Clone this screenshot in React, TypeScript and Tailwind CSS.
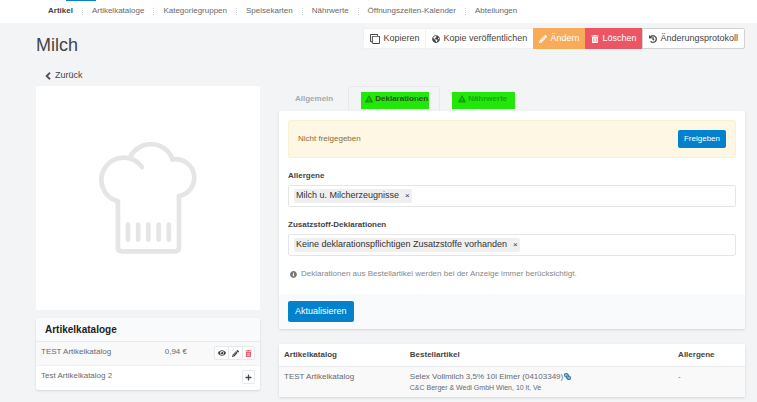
import React, { useState } from 'react';
import {
  FaChevronLeft,
  FaExclamationTriangle,
  FaEye,
  FaGlobeAmericas,
  FaHistory,
  FaInfoCircle,
  FaLink,
  FaPencilAlt,
  FaPlus,
  FaRegClone,
  FaTrashAlt,
} from 'react-icons/fa';

const NAV_ITEMS = [
  'Artikel',
  'Artikelkataloge',
  'Kategoriegruppen',
  'Speisekarten',
  'Nährwerte',
  'Öffnungszeiten-Kalender',
  'Abteilungen',
];

const ChefHat: React.FC = () => (
  <svg
    viewBox="0 0 292 332"
    className="w-[44%]"
    fill="none"
    stroke="#e5e5e5"
    strokeWidth="14"
    strokeLinecap="round"
    strokeLinejoin="round"
    aria-hidden="true"
  >
    <path d="M127 74 A66 66 0 1 0 56 176 V312 Q56 324 68 324 H225 Q237 324 237 312 V160 A54 54 0 1 0 218 52" />
    <path d="M94 42 A68 68 0 0 1 218 52" />
    <path d="M86 245 V289 M116 245 V289 M146 245 V289 M177 245 V289 M207 245 V289" />
  </svg>
);

const TopNav: React.FC = () => (
  <header className="bg-white h-[23px]">
    <div className="ml-[66px] h-px w-[30px] bg-[#0282cc]" />
    <nav className="flex items-center h-5 pl-12 text-[8px] whitespace-nowrap">
      {NAV_ITEMS.map((item, i) => (
        <React.Fragment key={item}>
          {i > 0 && <span className="mx-[9px] h-[7px] border-l border-dotted border-gray-300" />}
          <a href="#" className={i === 0 ? 'font-bold text-[#444]' : 'text-[#676a6c]'}>
            {item}
          </a>
        </React.Fragment>
      ))}
    </nav>
  </header>
);

const Toolbar: React.FC = () => (
  <div className="flex h-[21px] text-[9px] text-[#444] whitespace-nowrap">
    <button className="flex items-center gap-[3px] px-1.5 bg-white border border-[#eef0f1] rounded-l-xs">
      <FaRegClone size={10} className="-scale-y-100" /> Kopieren
    </button>
    <button className="flex items-center gap-[3px] px-1.5 bg-white border-y border-[#eef0f1]">
      <FaGlobeAmericas size={8} /> Kopie veröffentlichen
    </button>
    <button className="flex items-center gap-[3px] px-1.5 bg-[#f8ac59] text-white">
      <FaPencilAlt size={8} /> Ändern
    </button>
    <button className="flex items-center gap-[3px] px-1.5 bg-[#ed5565] text-white">
      <FaTrashAlt size={8} /> Löschen
    </button>
    <button className="flex items-center gap-[3px] px-1.5 bg-white border border-[#d2d2d2] rounded-r-xs">
      <FaHistory size={8} strokeWidth={20} /> Änderungsprotokoll
    </button>
  </div>
);

const CatalogCard: React.FC = () => (
  <section className="bg-white rounded-xs shadow-sm overflow-hidden">
    <h2 className="flex items-center h-[23px] px-[9px] bg-[#f9fafc] text-[10px] font-bold text-[#222]">
      Artikelkataloge
    </h2>
    <table className="w-full text-[8px] leading-3 text-[#676a6c]">
      <tbody>
        <tr className="h-6 bg-[#f9f9f9] border-t border-[#e7eaec] align-top">
          <td className="pt-1 pl-[5px]">TEST Artikelkatalog</td>
          <td className="pt-1 text-right">0,94 €</td>
          <td className="w-[73px] pt-1 pr-[5px]">
            <div className="flex justify-end">
              <button aria-label="Anzeigen" className="flex items-center justify-center w-[15px] h-[14px] bg-white border border-[#e7eaec] rounded-l-xs text-[#444]">
                <FaEye size={8} />
              </button>
              <button aria-label="Bearbeiten" className="flex items-center justify-center w-[13px] h-[14px] bg-white border-y border-[#e7eaec] text-[#444]">
                <FaPencilAlt size={7} />
              </button>
              <button aria-label="Entfernen" className="flex items-center justify-center w-[13px] h-[14px] bg-white border border-[#e7eaec] rounded-r-xs text-[#ed5565]">
                <FaTrashAlt size={7} />
              </button>
            </div>
          </td>
        </tr>
        <tr className="h-6 border-t border-[#f0f1f2] align-top">
          <td className="pt-1 pl-[5px]">Test Artikelkatalog 2</td>
          <td />
          <td className="pt-1 pr-[5px]">
            <button aria-label="Hinzufügen" className="flex items-center justify-center ml-auto w-[13px] h-[14px] bg-white border border-[#e7eaec] rounded-xs text-[#444]">
              <FaPlus size={7} />
            </button>
          </td>
        </tr>
      </tbody>
    </table>
  </section>
);

interface TagFieldProps {
  id: string;
  label: string;
  tag: string;
}

const TagField: React.FC<TagFieldProps> = ({ id, label, tag }) => {
  const [tags, setTags] = useState([tag]);

  return (
    <div className="mt-3">
      <label htmlFor={id} className="block text-[8px] leading-3 font-bold text-[#444]">
        {label}
      </label>
      <div className="flex items-center h-[22px] mt-[3px] px-[5px] bg-white border border-[#e3e5e7] rounded-xs">
        {tags.map((t) => (
          <span key={t} className="flex items-center gap-1.5 h-[14px] px-0.5 bg-[#efefef] rounded-xs text-[9px] text-[#333] whitespace-nowrap">
            {t}
            <button
              type="button"
              aria-label={`${t} entfernen`}
              onClick={() => setTags(tags.filter((x) => x !== t))}
              className="text-[8px]"
            >
              ×
            </button>
          </span>
        ))}
        <input id={id} type="text" className="flex-1 min-w-0 ml-1 text-[9px] outline-none" />
      </div>
    </div>
  );
};

const Tabs: React.FC = () => (
  <div role="tablist" className="flex h-[25px] text-[8px] font-bold whitespace-nowrap">
    <button role="tab" aria-selected="false" className="pl-4 pr-[15px] text-[#a8a9ab]">
      Allgemein
    </button>
    <button role="tab" aria-selected="true" className="flex items-end pb-0.5 pl-3 pr-[10px] border border-b-0 border-[#e7eaec] rounded-t-xs">
      <span className="flex items-center gap-[2px] h-[17px] pl-1 pr-px pb-1 bg-[#22e80a] text-[#27501b]">
        <FaExclamationTriangle size={8} className="text-[#139c05]" /> Deklarationen
      </span>
    </button>
    <button role="tab" aria-selected="false" className="flex items-end pb-0.5 px-3">
      <span className="flex items-center gap-[2px] h-[17px] pl-1.5 pr-2 pb-1 bg-[#22e80a] text-[#1ba60c]">
        <FaExclamationTriangle size={8} className="text-[#139c05]" /> Nährwerte
      </span>
    </button>
  </div>
);

const DeclarationPanel: React.FC = () => (
  <form className="bg-white rounded-xs shadow-sm overflow-hidden" onSubmit={(e) => e.preventDefault()}>
    <div className="p-[9px] pb-[14px]">
      <div className="flex items-center justify-between h-[38px] px-[9px] bg-[#fdf7e3] border border-[#faf0d3] rounded-xs text-[8px] text-[#8a6d3b]">
        Nicht freigegeben
        <button type="button" className="h-[18px] px-1.5 rounded-xs bg-[#0282cc] text-[8px] text-white">
          Freigeben
        </button>
      </div>
      <TagField id="allergene" label="Allergene" tag="Milch u. Milcherzeugnisse" />
      <TagField
        id="zusatzstoffe"
        label="Zusatzstoff-Deklarationen"
        tag="Keine deklarationspflichtigen Zusatzstoffe vorhanden"
      />
      <p className="flex items-center gap-1 mt-3 pl-0.5 text-[8px] leading-3 text-[#888]">
        <FaInfoCircle size={7} className="text-[#777]" />
        Deklarationen aus Bestellartikel werden bei der Anzeige immer berücksichtigt.
      </p>
    </div>
    <div className="px-[9px] pt-[7px] pb-[7px] bg-[#f9fafc]">
      <button type="submit" className="block h-[21px] px-[7px] rounded-xs bg-[#0282cc] text-[9px] text-white">
        Aktualisieren
      </button>
    </div>
  </form>
);

const OrderTable: React.FC = () => (
  <div className="mt-[15px] bg-white shadow-sm">
    <table className="w-full table-fixed text-left text-[8px] text-[#676a6c]">
      <thead>
        <tr className="h-[22px] text-[#444]">
          <th className="w-[27%] pl-[5px]">Artikelkatalog</th>
          <th className="pl-[5px]">Bestellartikel</th>
          <th className="w-[15%] pl-[3px]">Allergene</th>
        </tr>
      </thead>
      <tbody>
        <tr className="bg-[#f9f9f9] border-t border-[#e7eaec] align-top">
          <td className="pt-1 pl-[5px] leading-3">TEST Artikelkatalog</td>
          <td className="pt-1 pb-[5px] pl-[5px]">
            <div className="flex items-center gap-px leading-3">
              Selex Vollmilch 3,5% 10l Eimer (04103349)
              <a href="#" aria-label="Bestellartikel öffnen" className="text-[#337ab7]">
                <FaLink size={7} strokeWidth={30} className="-scale-x-100" />
              </a>
            </div>
            <div className="text-[7px] leading-[9px]">C&amp;C Berger &amp; Wedl GmbH Wien, 10 lt, Ve</div>
          </td>
          <td className="pt-1 pl-[3px] leading-3">-</td>
        </tr>
      </tbody>
    </table>
  </div>
);

export default function App() {
  return (
    <div className="min-h-screen bg-[#f3f4f6] font-['Liberation_Sans',Arial,sans-serif]">
      <TopNav />
      <main className="pl-9 pr-3 pt-[5px]">
        <div className="flex items-start justify-between">
          <h1 className="pt-[5px] text-[18px] leading-6 text-[#444]">Milch</h1>
          <Toolbar />
        </div>
        <a href="#" className="flex w-fit items-center gap-[3px] h-4 mt-[11px] mb-[2px] ml-2 text-[9px] text-[#444]">
          <FaChevronLeft size={8} strokeWidth={50} /> Zurück
        </a>
        <div className="grid grid-cols-[224fr_466fr] gap-[19px] items-start">
          <div>
            <div className="flex items-center justify-center aspect-square mb-2 bg-white rounded-xs">
              <ChefHat />
            </div>
            <CatalogCard />
          </div>
          <div>
            <Tabs />
            <DeclarationPanel />
            <OrderTable />
          </div>
        </div>
      </main>
    </div>
  );
}
